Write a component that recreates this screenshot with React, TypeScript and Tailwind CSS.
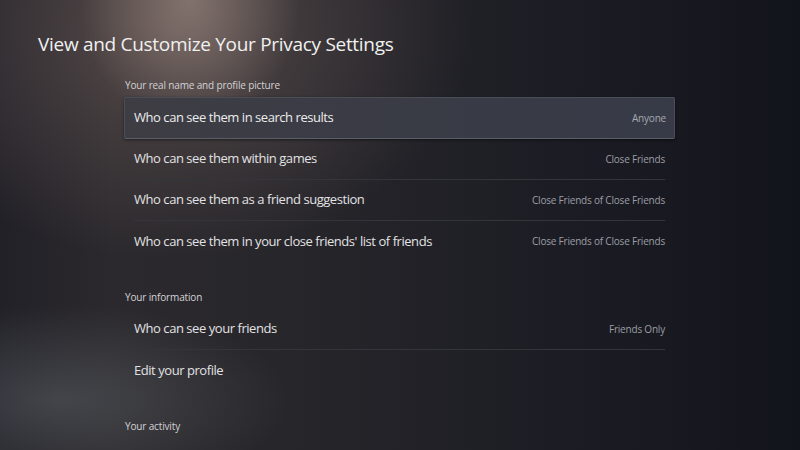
import React from "react";

type Row = { label: string; value?: string; selected?: boolean };

const sections: { title: string; rows: Row[] }[] = [
  {
    title: "Your real name and profile picture",
    rows: [
      { label: "Who can see them in search results", value: "Anyone", selected: true },
      { label: "Who can see them within games", value: "Close Friends" },
      { label: "Who can see them as a friend suggestion", value: "Close Friends of Close Friends" },
      { label: "Who can see them in your close friends' list of friends", value: "Close Friends of Close Friends" },
    ],
  },
  {
    title: "Your information",
    rows: [
      { label: "Who can see your friends", value: "Friends Only" },
      { label: "Edit your profile" },
    ],
  },
  { title: "Your activity", rows: [] },
];

function SettingRow({ row, last }: { row: Row; last: boolean }) {
  if (row.selected) {
    return (
      <div className="h-[42px] flex items-center justify-between pl-[9px] pr-[8px] rounded-[2px] border border-[#4a4e58] border-b-[#5a5e68] bg-[linear-gradient(90deg,#3e3d44_0%,#393b45_50%,#373b47_100%)] shadow-[0_1px_3px_rgba(0,0,0,0.5)]">
        <span className="text-[13px] tracking-[-0.45px] text-[#ececec]">{row.label}</span>
        <span className="text-[10px] tracking-[-0.2px] text-[#a6a8ae]">{row.value}</span>
      </div>
    );
  }
  return (
    <div className="px-[10px]">
      <div className={`h-[41px] flex items-center justify-between ${last ? "" : "border-b border-[#34353b]"}`}>
        <span className="text-[13px] tracking-[-0.45px] text-[#e2e2e4]">{row.label}</span>
        {row.value && <span className="text-[10px] tracking-[-0.2px] text-[#9c9ea4]">{row.value}</span>}
      </div>
    </div>
  );
}

export default function App() {
  return (
    <div
      className="w-[800px] h-[450px] overflow-hidden bg-[radial-gradient(ellipse_110px_130px_at_190px_0px,rgba(165,145,135,0.6),rgba(165,145,135,0)),radial-gradient(ellipse_300px_230px_at_170px_30px,rgba(125,105,100,0.5),rgba(125,105,100,0)),radial-gradient(ellipse_230px_95px_at_60px_400px,rgba(95,100,106,0.5),rgba(95,100,106,0)),linear-gradient(90deg,#222128_0%,#2b292d_14%,#27262b_35%,#1c1d24_70%,#12141c_100%)]"
      style={{ fontFamily: '"Open Sans", "Noto Sans", sans-serif' }}
    >
      <div className="pt-[30px] pl-[38px]">
        <h1 className="text-[19px] leading-[28px] tracking-[-0.3px] text-[#f0f0f0]">
          View and Customize Your Privacy Settings
        </h1>
      </div>
      <div className="ml-[124px] w-[551px] mt-[19px] flex flex-col">
        {sections.map((s, i) => (
          <div key={s.title} className={i === 0 ? "" : "mt-[27px]"}>
            <div className="h-[16px] flex items-center pl-[1px] text-[10px] tracking-[-0.15px] text-[#d2d2d5] mb-[4px]">{s.title}</div>
            <div className="flex flex-col">
              {s.rows.map((r, j) => (
                <SettingRow key={r.label} row={r} last={j === s.rows.length - 1} />
              ))}
            </div>
          </div>
        ))}
      </div>
    </div>
  );
}
